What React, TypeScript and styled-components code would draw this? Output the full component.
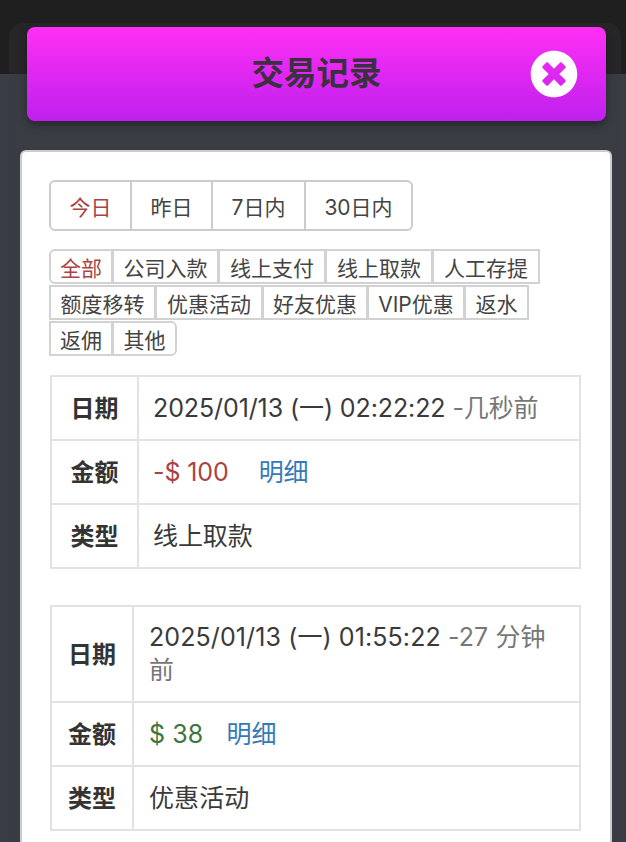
import { FaTimesCircle } from "react-icons/fa";
import styled, { createGlobalStyle } from "styled-components";

const GlobalStyle = createGlobalStyle`
  html, body {
    margin: 0;
    padding: 0;
    background: #3a3d45;
  }

  * {
    box-sizing: border-box;
  }
`;

const Page = styled.div`
  position: relative;
  width: 626px;
  height: 842px;
  overflow: hidden;
  padding-top: 23px;
  background: #3a3d45;
  color: #333;
  font-family: Inter, "Noto Sans CJK SC", sans-serif;
`;

const TopBand = styled.div`
  position: absolute;
  top: 0;
  left: 0;
  right: 0;
  height: 74px;
  background: #1f1f1f;
`;

const Dialog = styled.div`
  position: relative;
  margin-left: 9px;
  margin-right: 5px;
  padding-top: 4px;
  border-radius: 14px 14px 0 0;
  background: rgba(58, 61, 69, 0.25);
`;

const Header = styled.header`
  display: flex;
  align-items: center;
  justify-content: center;
  position: relative;
  width: 579px;
  height: 94px;
  margin-left: 18px;
  border-radius: 8px;
  background: linear-gradient(to bottom, #ff2ff5, #bf20ee);
  box-shadow: 0 4px 8px rgba(0, 0, 0, 0.35);
`;

const Title = styled.h1`
  margin: 0;
  color: #3b3040;
  font-size: 32.5px;
  font-weight: 700;
  line-height: 1;
`;

const CloseIcon = styled(FaTimesCircle)`
  position: absolute;
  top: 23px;
  left: 503px;
  width: 48px;
  height: 48px;
  color: #fff;
`;

const Card = styled.section`
  width: 592px;
  height: 730px;
  margin: 29px 0 0 11px;
  padding: 28px 29px 0 27px;
  border: 2px solid #ccc;
  border-bottom: 0;
  border-radius: 6px 6px 0 0;
  background: #fff;
`;

const Tabs = styled.div`
  display: flex;
  height: 51px;
`;

const TabButton = styled.div<{ $active?: boolean; $width: number }>`
  display: flex;
  align-items: center;
  justify-content: center;
  width: ${(p) => p.$width}px;
  margin-left: -2px;
  border: 2px solid #ccc;
  color: ${(p) => (p.$active ? "#a94442" : "#444")};
  font-size: 21px;

  &:first-child {
    margin-left: 0;
    border-radius: 6px 0 0 6px;
  }

  &:last-child {
    border-radius: 0 6px 6px 0;
  }
`;

const Filters = styled.div`
  display: flex;
  flex-wrap: wrap;
  width: 500px;
  margin-top: 18px;
  row-gap: 1px;
`;

const FilterButton = styled.div<{ $active?: boolean; $width: number }>`
  display: flex;
  align-items: center;
  justify-content: center;
  width: ${(p) => p.$width}px;
  height: 35px;
  margin-right: -1px;
  border: 2px solid #d2d2d2;
  color: ${(p) => (p.$active ? "#a94442" : "#444")};
  font-size: 21px;
  white-space: nowrap;

  &:first-child {
    border-radius: 6px 0 0 6px;
  }

  &:last-child {
    border-radius: 0 6px 6px 0;
  }
`;

const RecordTable = styled.table<{ $spacing: number }>`
  width: 531px;
  margin: 19px 0 0 1px;
  border: 2px solid #e2e2e2;
  border-collapse: collapse;
  table-layout: fixed;
  font-size: 25px;
  letter-spacing: ${(p) => p.$spacing}px;

  & + & {
    margin-top: 36px;
  }
`;

const Label = styled.th<{ $width: number; $height?: number }>`
  width: ${(p) => p.$width}px;
  height: ${(p) => p.$height ?? 64}px;
  padding: 0 0 3px;
  border: 2px solid #e2e2e2;
  color: #333;
  font-size: 24px;
  font-weight: 700;
  letter-spacing: 0;
  text-align: center;
`;

const Value = styled.td<{ $indent: number }>`
  padding: 14px ${(p) => p.$indent}px;
  border: 2px solid #e2e2e2;
  color: #3a3a3a;
  line-height: 33px;
`;

const Ago = styled.span`
  color: #777;
`;

const Amount = styled.span<{ $tone: "out" | "in"; $gap: number }>`
  margin-right: ${(p) => p.$gap}px;
  color: ${(p) => (p.$tone === "out" ? "#a94442" : "#3c763d")};
`;

const DetailLink = styled.a`
  color: #337ab7;
`;

const tabs = [
  { label: "今日", width: 83 },
  { label: "昨日", width: 83 },
  { label: "7日内", width: 95 },
  { label: "30日内", width: 109 },
];

const filters = [
  { label: "全部", width: 64 },
  { label: "公司入款", width: 107 },
  { label: "线上支付", width: 108 },
  { label: "线上取款", width: 108 },
  { label: "人工存提", width: 108 },
  { label: "额度移转", width: 107 },
  { label: "优惠活动", width: 108 },
  { label: "好友优惠", width: 106 },
  { label: "VIP优惠", width: 98 },
  { label: "返水", width: 65 },
  { label: "返佣", width: 64 },
  { label: "其他", width: 65 },
];

function App() {
  return (
    <Page>
      <GlobalStyle />
      <TopBand />
      <Dialog>
        <Header>
          <Title>交易记录</Title>
          <CloseIcon />
        </Header>
        <Card>
          <Tabs>
            {tabs.map((tab, i) => (
              <TabButton key={tab.label} $active={i === 0} $width={tab.width}>
                {tab.label}
              </TabButton>
            ))}
          </Tabs>
          <Filters>
            {filters.map((filter, i) => (
              <FilterButton key={filter.label} $active={i === 0} $width={filter.width}>
                {filter.label}
              </FilterButton>
            ))}
          </Filters>
          <RecordTable $spacing={-0.1}>
            <tbody>
              <tr>
                <Label $width={87}>日期</Label>
                <Value $indent={14}>
                  2025/01/13 (一) 02:22:22 <Ago>-几秒前</Ago>
                </Value>
              </tr>
              <tr>
                <Label $width={87}>金额</Label>
                <Value $indent={14}>
                  <Amount $tone="out" $gap={30}>-$ 100</Amount>
                  <DetailLink>明细</DetailLink>
                </Value>
              </tr>
              <tr>
                <Label $width={87}>类型</Label>
                <Value $indent={14}>线上取款</Value>
              </tr>
            </tbody>
          </RecordTable>
          <RecordTable $spacing={0.1}>
            <tbody>
              <tr>
                <Label $width={82} $height={96}>日期</Label>
                <Value $indent={15}>
                  2025/01/13 (一) 01:55:22 <Ago>-27 分钟前</Ago>
                </Value>
              </tr>
              <tr>
                <Label $width={82}>金额</Label>
                <Value $indent={15}>
                  <Amount $tone="in" $gap={23}>$ 38</Amount>
                  <DetailLink>明细</DetailLink>
                </Value>
              </tr>
              <tr>
                <Label $width={82}>类型</Label>
                <Value $indent={15}>优惠活动</Value>
              </tr>
            </tbody>
          </RecordTable>
        </Card>
      </Dialog>
    </Page>
  );
}

export default App;
